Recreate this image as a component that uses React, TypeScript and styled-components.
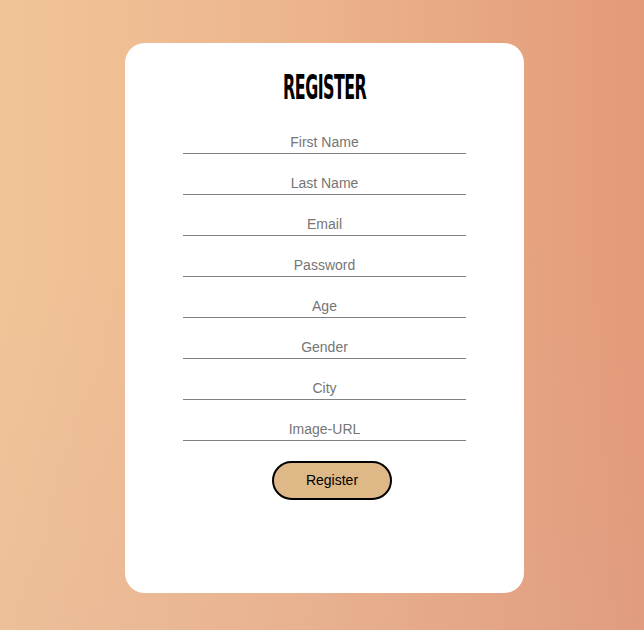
import styled, { createGlobalStyle } from "styled-components"

const GlobalStyle = createGlobalStyle`
  html, body {
    margin: 0;
    padding: 0;
  }

  body {
    min-height: 630px;
    font-family: "Liberation Sans", Arial, sans-serif;
    background:
      linear-gradient(to bottom, rgba(220, 170, 160, 0) 40%, rgba(215, 165, 160, 0.18) 100%),
      linear-gradient(90deg, #f1c597 0%, #ecb58e 45%, #e39a78 100%);
  }
`

const fields = [
  { name: "firstName", placeholder: "First Name", type: "text" },
  { name: "lastName", placeholder: "Last Name", type: "text" },
  { name: "email", placeholder: "Email", type: "email" },
  { name: "password", placeholder: "Password", type: "password" },
  { name: "age", placeholder: "Age", type: "text" },
  { name: "gender", placeholder: "Gender", type: "text" },
  { name: "city", placeholder: "City", type: "text" },
  { name: "imageUrl", placeholder: "Image-URL", type: "text" },
]

const Page = styled.div`
  display: flex;
  justify-content: center;
  padding: 43px 0 0 5px;
`

const Card = styled.div`
  box-sizing: border-box;
  width: 399px;
  height: 550px;
  background: #ffffff;
  border-radius: 20px;
  padding-top: 28px;
  display: flex;
  flex-direction: column;
  align-items: center;
`

const Title = styled.h1`
  margin: 0;
  font-family: "DejaVu Sans Condensed", "DejaVu Sans", sans-serif;
  font-weight: bold;
  font-size: 33px;
  line-height: 33px;
  text-transform: uppercase;
  letter-spacing: -1px;
  color: #000000;
  transform: scaleX(0.535);
`

const Form = styled.form`
  margin-top: 29px;
  display: flex;
  flex-direction: column;
  align-items: center;
  gap: 20px;
`

const Field = styled.input`
  box-sizing: content-box;
  width: 283px;
  height: 18px;
  padding: 0 0 2px;
  border: none;
  border-bottom: 1px solid #808080;
  outline: none;
  background: transparent;
  text-align: center;
  font-family: "Liberation Sans", Arial, sans-serif;
  font-size: 14px;
  color: #333333;

  &::placeholder {
    color: #757575;
  }
`

const SubmitButton = styled.button`
  box-sizing: border-box;
  width: 120px;
  height: 39px;
  margin-left: 15px;
  padding: 0 0 2px;
  border: 2px solid #000000;
  border-radius: 20px;
  background: #deb887;
  font-family: "Liberation Sans", Arial, sans-serif;
  font-size: 14px;
  color: #000000;
  cursor: pointer;
`

export default function App() {
  return (
    <Page>
      <GlobalStyle />
      <Card>
        <Title>Register</Title>
        <Form onSubmit={(e) => e.preventDefault()}>
          {fields.map((field) => (
            <Field
              key={field.name}
              name={field.name}
              type={field.type}
              placeholder={field.placeholder}
            />
          ))}
          <SubmitButton type="submit">Register</SubmitButton>
        </Form>
      </Card>
    </Page>
  )
}
